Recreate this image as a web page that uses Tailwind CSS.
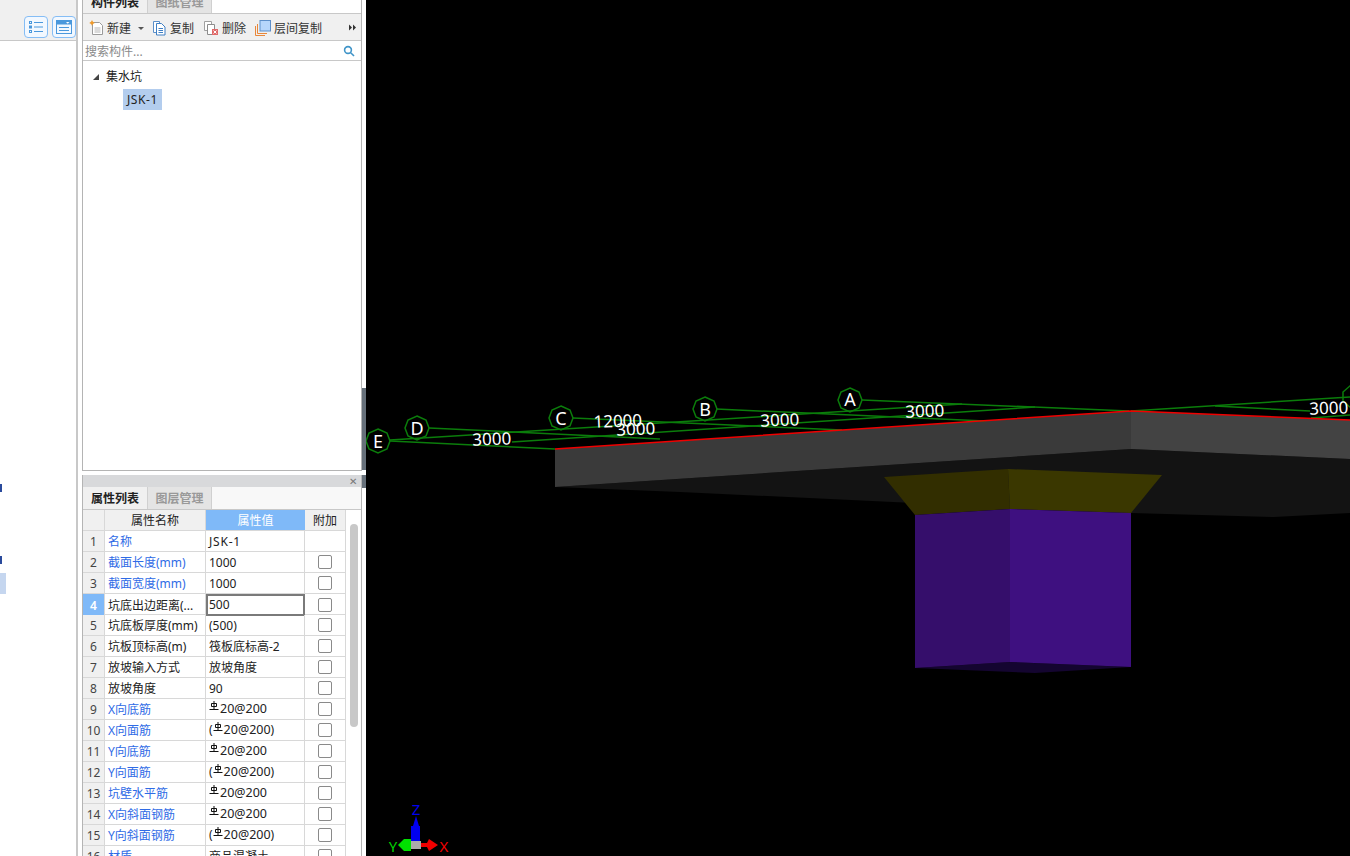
<!DOCTYPE html>
<html lang="zh-CN">
<head>
  <meta charset="UTF-8">
  <title>构件列表</title>
  <script src="https://cdn.jsdelivr.net/npm/@tailwindcss/browser@4"></script>
</head>
<body class="bg-white overflow-hidden font-['Noto_Sans','Noto_Sans_CJK_SC',sans-serif] text-[12px] text-[#222]">
  <div class="flex w-[1350px] h-[856px] overflow-hidden">

    <!-- Left strip -->
    <div class="w-[78px] shrink-0 border-r-2 border-[#c8c8c8] flex flex-col">
      <div class="h-[41px] bg-[#f0f0f0] border-b border-[#c8c8c8] flex items-center justify-end gap-[4px] pt-[14px]">
        <span class="w-[24px] h-[22px] rounded-[4px] border border-[#85bdf5] bg-[#f2f8ff] flex items-center justify-center">
          <svg width="16" height="14" viewBox="0 0 16 14" fill="none" stroke="#4a98dc"><rect x="1.5" y="1.500" width="2" height="2"/><rect x="1.5" y="6" width="2" height="2"/><rect x="1.5" y="10.500" width="2" height="2"/><path d="M6 2.500h9M6 7h9M6 11.500h9"/></svg>
        </span>
        <span class="w-[24px] h-[22px] rounded-[4px] border border-[#85bdf5] bg-[#f2f8ff] flex items-center justify-center">
          <svg width="16" height="14" viewBox="0 0 16 14" fill="none"><rect x="0.5" y="0.5" width="15" height="13" stroke="#4a98dc"/><rect x="1" y="1" width="14" height="3.500" fill="#4a98dc"/><path d="M3 7.500h10M3 10.500h10" stroke="#4a98dc"/><path d="M10 2h3.500l-1.700 1.800z" fill="#fff"/></svg>
        </span>
      </div>
      <div class="w-[2px] h-[8px] bg-[#2a4a9c] mt-[443px]"></div>
      <div class="w-[2px] h-[8px] bg-[#2a4a9c] mt-[64px]"></div>
      <div class="w-[6px] h-[21px] bg-[#c5d6ef] mt-[9px]"></div>
    </div>

    <div class="w-[4px] shrink-0"></div>

    <!-- Panels -->
    <div class="w-[280px] shrink-0 flex flex-col">
      <!-- Component list -->
      <div class="h-[471px] border-x border-b border-[#b4b4b4] flex flex-col">
        <div class="h-[14px] flex overflow-hidden border-b border-[#c8c8c8] bg-white">
          <div class="w-[64px] h-[13px] bg-[#f0f0f0] font-semibold flex items-end justify-center"><span class="leading-[20px]">构件列表</span></div>
          <div class="w-[65px] h-[13px] bg-[#e4e4e4] border-x border-[#d0d0d0] text-[#999] font-semibold flex items-end justify-center"><span class="leading-[20px]">图纸管理</span></div>
        </div>
        <div class="h-[27px] bg-[#f0f0f0] border-b border-[#c8c8c8] flex items-center pl-[6px] pr-[3px] pt-[3px]">
          <svg class="-mt-[2px]" width="16" height="16" viewBox="0 0 16 16" fill="none"><path d="M3.500 2.500h7l3 3v9h-10z" fill="#fff" stroke="#9a9a9a"/><path d="M5.500 8h6M5.500 10h6M5.500 12h6" stroke="#b5b5b5"/><path d="M3 0l.9 1.800L5.800 3l-1.900.9L3 5.800l-.9-1.900L.2 3l1.900-1.200z" fill="#f09a2a"/></svg>
          <span class="ml-[2px] text-[#333]">新建</span>
          <span class="ml-[7px] border-x-[3px] border-x-transparent border-t-[3px] border-t-[#555]"></span>
          <svg class="ml-[8px] -mt-[2px]" width="15" height="16" viewBox="0 0 15 16" fill="none"><path d="M1.500 1.500h6v11h-6z" fill="#fff" stroke="#5b8fc9"/><path d="M4.500 3.500h5l3.500 3.500v8h-8.500z" fill="#fff" stroke="#3f7fc4"/><path d="M6.500 8.500h4.500M6.500 10.500h4.500M6.500 12.500h4.500" stroke="#3f7fc4"/></svg>
          <span class="ml-[3px] text-[#333]">复制</span>
          <svg class="ml-[9px] -mt-[2px]" width="16" height="16" viewBox="0 0 16 16" fill="none"><path d="M1.500 1.500h7v9h-7z" fill="#fff" stroke="#a0a0a0"/><path d="M4.500 4.500h7v10h-7z" fill="#fff" stroke="#8c8c8c"/><rect x="9" y="9" width="6" height="6" fill="#e06a6a"/><path d="M10.500 10.500l3 3M13.500 10.500l-3 3" stroke="#fff"/></svg>
          <span class="ml-[3px] text-[#333]">删除</span>
          <svg class="ml-[9px] -mt-[2px]" width="16" height="16" viewBox="0 0 16 16" fill="none"><path d="M.5 6v9.500h9.500" stroke="#e8873a"/><path d="M2.500 4v9.500h9.500" stroke="#e8873a"/><rect x="5" y="0.5" width="10.500" height="10.500" fill="#b6d6fb" stroke="#5d8fc9"/></svg>
          <span class="ml-[3px] text-[#333]">层间复制</span>
          <svg class="ml-auto mr-[2px] -mt-[2px]" width="7" height="7" viewBox="0 0 7 7" fill="#333"><path d="M0 .5l3 3-3 3zM4 .5l3 3-3 3z"/></svg>
        </div>
        <div class="h-[20px] border-b border-[#c8c8c8] flex items-center justify-between pl-[2px] pr-[6px] pt-[3px] text-[#8a8a8a]">
          <span>搜索构件...</span>
          <svg class="-mt-[2px]" width="12" height="12" viewBox="0 0 12 12" fill="none" stroke="#3f94c8" stroke-width="1.6"><circle cx="5" cy="5" r="3.400"/><path d="M7.700 7.700L11 11"/></svg>
        </div>
        <div class="flex-1 pt-[6px]">
          <div class="h-[20px] flex items-center pl-[10px]">
            <span class="w-0 h-0 border-l-[6px] border-l-transparent border-b-[6px] border-b-[#444]"></span>
            <span class="ml-[7px]">集水坑</span>
          </div>
          <div class="ml-[40px] mt-[2px] w-[39px] h-[21px] bg-[#b3cdee] flex items-center justify-center tracking-[0.6px]">JSK-1</div>
        </div>
      </div>

      <div class="h-[4px] shrink-0"></div>

      <!-- Property list -->
      <div class="flex-1 border-x border-[#b4b4b4] flex flex-col overflow-hidden">
        <div class="h-[12px] shrink-0 bg-[#d8d9db] flex items-center justify-end pr-[4px] text-[#777] text-[10px] leading-none">✕</div>
        <div class="h-[23px] shrink-0 flex border-b border-[#c8c8c8] bg-[#f8f8f8]">
          <div class="w-[64px] bg-[#f0f0f0] font-semibold flex items-center justify-center pt-[1px]">属性列表</div>
          <div class="w-[65px] bg-[#e4e4e4] border-x border-[#d0d0d0] text-[#999] font-semibold flex items-center justify-center pt-[1px]">图层管理</div>
        </div>
        <div class="flex flex-1 min-h-0">
          <div id="propTable" class="w-[263px] shrink-0"></div>
          <div class="flex-1 pt-[14px] pl-[4px]">
            <div class="w-[8px] h-[203px] rounded-[4px] bg-[#c8c8c8]"></div>
          </div>
        </div>
      </div>
    </div>

    <!-- Splitter -->
    <div class="w-[4px] shrink-0 flex flex-col">
      <div class="h-[388px]"></div>
      <div class="h-[82px] bg-[#66707a]"></div>
      <div class="h-[5px]"></div>
      <div class="h-[13px] bg-[#66707a]"></div>
    </div>

    <!-- 3D view -->
    <div class="flex-1 bg-black relative overflow-hidden">
      <svg class="block" width="984" height="856" viewBox="366 0 984 856" font-family="Noto Sans, sans-serif">
        <!-- slab -->
        <polygon points="555,487 680,492 914,503 1131,513 1274,517 1350,513 1350,459 1131,449" fill="#131313"/>
        <polygon points="555,449 1131,411 1131,449 555,487" fill="#3a3a3a"/>
        <polygon points="1131,411 1350,420 1350,459 1131,449" fill="#434343"/>
        <!-- pit -->
        <polygon points="915,668 1010,662 1131,667 1035,673" fill="#140530"/>
        <polygon points="884,477 1008,469 1010,509 915,515" fill="#322e00"/>
        <polygon points="1008,469 1162,475 1131,513 1010,509" fill="#3a3700"/>
        <polygon points="915,515 1010,509 1010,662 915,668" fill="#350e6b"/>
        <polygon points="1010,509 1131,513 1131,667 1010,662" fill="#3e1080"/>
        <!-- axes -->
        <g fill="none" stroke="#0b7d0b" stroke-width="1.500">
          <path d="M390,441 L555,449"/>
          <path d="M429,428 L660,439"/>
          <path d="M573,418 L842,430"/>
          <path d="M716,409 L985,421"/>
          <path d="M862,400 L1129,411"/>
          <path d="M390,440 L962,404"/>
          <path d="M512,442 L1035,407"/>
          <path d="M1131,411 L1350,397"/>
          <path d="M1215,406 L1310,411"/>
          <path d="M1311,418 L1350,415"/>
          <polygon points="378,429 387,433 390,441 387,449 378,453 369,449 366,441 369,433"/>
          <polygon points="417,416 426,420 429,428 426,436 417,440 408,436 405,428 408,420"/>
          <polygon points="561,406 570,410 573,418 570,426 561,430 552,426 549,418 552,410"/>
          <polygon points="705,397 714,401 717,409 714,417 705,421 696,417 693,409 696,401"/>
          <polygon points="850,388 859,392 862,400 859,408 850,412 841,408 838,400 841,392"/>
          <polygon points="1351,385 1343,392 1343,401 1351,408"/>
        </g>
        <!-- red edge -->
        <polyline points="555,449 1131,411 1350,420" fill="none" stroke="#f00000" stroke-width="1.500"/>
        <g fill="#fff" font-size="18" text-anchor="middle">
          <text x="378" y="448">E</text>
          <text x="417" y="435">D</text>
          <text x="561" y="425">C</text>
          <text x="705" y="416">B</text>
          <text x="850" y="406">A</text>
        </g>
        <g fill="#fff" font-size="17" text-anchor="middle">
          <text transform="translate(492 445) rotate(-2)">3000</text>
          <text transform="translate(618 427) rotate(-2)">12000</text>
          <text transform="translate(636 435) rotate(-2)">3000</text>
          <text transform="translate(780 426) rotate(-2)">3000</text>
          <text transform="translate(925 417) rotate(-2)">3000</text>
          <text transform="translate(1329 414) rotate(-2)">3000</text>
        </g>
        <!-- gizmo -->
        <polygon points="416,816 419,826 420,826 420,841 411,841 411,826 413,826" fill="#0000f0"/>
        <polygon points="411,839 404,839 398,845 404,851 411,851" fill="#00e000"/>
        <polygon points="421,843 427,843 429,839 438,845 429,851 427,847 421,847" fill="#f00000"/>
        <rect x="411" y="841" width="10" height="8" fill="#aaa"/>
        <g font-size="15" text-anchor="middle">
          <text x="416" y="815" fill="#0000f0">Z</text>
          <text x="393" y="852" fill="#00d000">Y</text>
          <text x="444" y="852" fill="#f00000">X</text>
        </g>
      </svg>
    </div>
  </div>

  <script>
    // 属性列表的数据: [名称, 属性值, 公有属性(蓝色)]
    const props = [
      ['名称', 'JSK-1', true],
      ['截面长度(mm)', '1000', true],
      ['截面宽度(mm)', '1000', true],
      ['坑底出边距离(...', '500', false],
      ['坑底板厚度(mm)', '(500)', false],
      ['坑板顶标高(m)', '筏板底标高-2', false],
      ['放坡输入方式', '放坡角度', false],
      ['放坡角度', '90', false],
      ['X向底筋', '@', true],
      ['X向面筋', '(@)', true],
      ['Y向底筋', '@', true],
      ['Y向面筋', '(@)', true],
      ['坑壁水平筋', '@', true],
      ['X向斜面钢筋', '@', true],
      ['Y向斜面钢筋', '(@)', true],
      ['材质', '商品混凝土', true]
    ];

    const rebar = '<svg class="inline-block align-[2px]" width="10" height="10" viewBox="0 0 10 10" fill="none" stroke="#111"><path d="M2.500 2.500h5v3h-5zM5 0v8M.5 8.500h9"/></svg>'
      + '<span class="text-[12.500px] pl-[1px]">20@200</span>';

    function valueHtml(v) {
      if (v === '@') return '<span>' + rebar + '</span>';
      if (v === '(@)') return '<span>(' + rebar + ')</span>';
      if (v === 'JSK-1') return '<span class="tracking-[0.8px]">JSK-1</span>';
      return v;
    }

    let html = '<div class="grid grid-cols-[22px_101px_99px_41px] h-[21px] border-b border-[#d8d8d8] bg-[#f0f0f0]">'
      + '<div class="border-r border-[#d8d8d8]"></div>'
      + '<div class="border-r border-[#d8d8d8] flex items-center justify-center pt-[1px]">属性名称</div>'
      + '<div class="bg-[#7fb9f8] text-white flex items-center justify-center pt-[1px]">属性值</div>'
      + '<div class="border-r border-[#d8d8d8] flex items-center justify-center pt-[1px]">附加</div></div>';

    props.forEach((p, i) => {
      const current = i === 3;
      const numClass = current ? 'bg-[#7fb9f8] text-white font-semibold' : 'bg-[#f0f0f0] text-[#444]';
      const nameClass = p[2] ? 'text-[#2f6be6]' : 'text-[#222]';
      const valueClass = current ? 'border-2 border-[#7a7a7a] pl-[1px]' : 'border-r border-[#d8d8d8] pl-[3px] pt-[1px]';
      html += '<div class="grid grid-cols-[22px_101px_99px_41px] h-[21px] border-b border-[#d8d8d8]">'
        + '<div class="border-r border-[#d8d8d8] flex items-center justify-center pt-[1px] ' + numClass + '">' + (i + 1) + '</div>'
        + '<div class="border-r border-[#d8d8d8] flex items-center pl-[3px] pt-[1px] whitespace-nowrap overflow-hidden ' + nameClass + '">' + p[0] + '</div>'
        + '<div class="flex items-center whitespace-nowrap ' + valueClass + '">' + valueHtml(p[1]) + '</div>'
        + '<div class="border-r border-[#d8d8d8] flex items-center justify-center">'
        + (i === 0 ? '' : '<span class="w-[14px] h-[14px] rounded-[2px] border border-[#8a8a8a] bg-white"></span>')
        + '</div></div>';
    });
    document.getElementById('propTable').innerHTML = html;
  </script>
</body>
</html>
